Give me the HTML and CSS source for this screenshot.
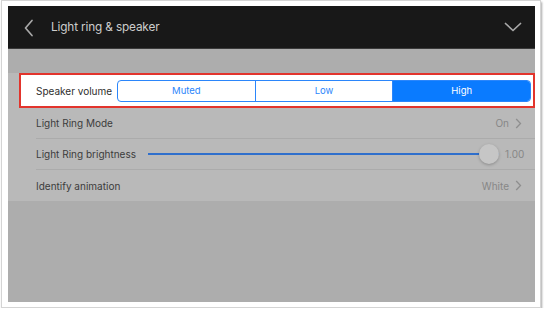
FILE: index.html
```html
<!DOCTYPE html>
<html>
<head>
<meta charset="utf-8">
<link rel="stylesheet" href="styles.css">
</head>
<body>
<div class="frame">
  <div class="screen">
    <div class="header">
      <svg class="back" width="12" height="18" viewBox="0 0 12 18"><path d="M9 1.5 L2.5 9 L9 16.5" fill="none" stroke="#a8a8a8" stroke-width="1.7" stroke-linecap="round" stroke-linejoin="round"/></svg>
      <span class="title">Light ring &amp; speaker</span>
      <svg class="down" width="18" height="12" viewBox="0 0 18 12"><path d="M1.5 2.5 L9 9.5 L16.5 2.5" fill="none" stroke="#a8a8a8" stroke-width="1.7" stroke-linecap="round" stroke-linejoin="round"/></svg>
    </div>
    <div class="content">
      <div class="list">
        <div class="row-hl">
          <span class="label">Speaker volume</span>
          <div class="seg">
            <span class="opt">Muted</span>
            <span class="opt">Low</span>
            <span class="opt on">High</span>
          </div>
        </div>
        <div class="row sep">
          <span class="label">Light Ring Mode</span>
          <span class="val">On<svg class="chev" width="7" height="11" viewBox="0 0 7 11"><path d="M1.2 1 L5.5 5.5 L1.2 10" fill="none" stroke="#8e8e8e" stroke-width="1.3"/></svg></span>
        </div>
        <div class="row sep slider-row">
          <span class="label">Light Ring brightness</span>
          <div class="slider"><div class="track"></div><div class="thumb"></div></div>
          <span class="num">1.00</span>
        </div>
        <div class="row">
          <span class="label">Identify animation</span>
          <span class="val">White<svg class="chev" width="7" height="11" viewBox="0 0 7 11"><path d="M1.2 1 L5.5 5.5 L1.2 10" fill="none" stroke="#8e8e8e" stroke-width="1.3"/></svg></span>
        </div>
      </div>
    </div>
  </div>
</div>
</body>
</html>
```
FILE: styles.css
```css
* { box-sizing: border-box; }
html, body { margin: 0; padding: 0; background: #ffffff; }
body { font-family: Inter, "Noto Sans", sans-serif; }

.frame {
  margin-left: 1px;
  width: 540px;
  height: 308px;
  border: 1px solid #d4d4d4;
  background: #ffffff;
  box-shadow: 1px 2px 2px rgba(0,0,0,0.35);
  padding: 5px 5px 5px 6px;
}

.screen {
  width: 527px;
  height: 296px;
  background: #adadad;
  display: flex;
  flex-direction: column;
}

.header {
  height: 43px;
  background: #181818;
  border-bottom: 1px solid #3a3a3a;
  display: flex;
  align-items: center;
  padding: 0 13px 0 15px;
}
.back { margin-top: 1px; }
.title {
  color: #cdcdcd;
  font-size: 11.8px;
  margin-left: 16px;
  flex: 1;
  letter-spacing: -0.15px;
}

.content { padding-top: 24px; }

.list {
  background: #b9b9b9;
  font-size: 10px;
  color: #3c3c3c;
}

.row-hl {
  margin-left: 11px;
  height: 35px;
  border: 2px solid #e2342c;
  background: #ffffff;
  display: flex;
  align-items: center;
  padding: 0 2px 0 15px;
}
.row-hl .label { color: #2e2e2e; width: 81px; }

.seg {
  flex: 1;
  height: 22px;
  display: flex;
  border: 1px solid #2b86fb;
  border-radius: 4px;
  overflow: hidden;
}
.opt {
  flex: 1;
  display: flex;
  align-items: center;
  justify-content: center;
  color: #2b86fb;
  font-size: 9.5px;
}
.opt + .opt { border-left: 1px solid #2b86fb; }
.opt.on { background: #0a7bff; color: #ffffff; }

.row {
  margin-left: 28px;
  height: 31px;
  display: flex;
  align-items: center;
  padding-right: 13px;
}
.row.sep { border-bottom: 1px solid #ababab; }
.row .label { flex: 1; }
.row .val { color: #878787; display: flex; align-items: center; }
.chev { margin-left: 6px; }

.slider-row { padding-right: 8px; }
.slider {
  position: relative;
  width: 351px;
  height: 22px;
  display: flex;
  align-items: center;
  margin-right: 6px;
}
.track {
  width: 100%;
  height: 2px;
  background: #2f6fcc;
}
.thumb {
  position: absolute;
  right: 0;
  top: 1px;
  width: 20px;
  height: 20px;
  border-radius: 50%;
  background: #c6c6c6;
  box-shadow: 0 1px 3px rgba(0,0,0,0.25);
}
.num { color: #878787; width: 22px; }
```
